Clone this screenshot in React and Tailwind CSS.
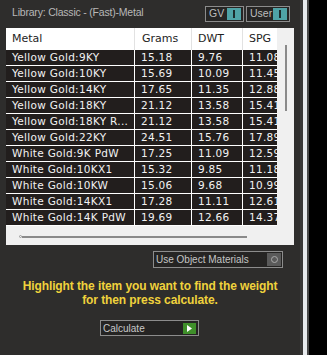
import React from "react";

const rows = [
  ["Yellow Gold:9KY", "15.18", "9.76", "11.08"],
  ["Yellow Gold:10KY", "15.69", "10.09", "11.45"],
  ["Yellow Gold:14KY", "17.65", "11.35", "12.88"],
  ["Yellow Gold:18KY", "21.12", "13.58", "15.41"],
  ["Yellow Gold:18KY R...", "21.12", "13.58", "15.41"],
  ["Yellow Gold:22KY", "24.51", "15.76", "17.89"],
  ["White Gold:9K PdW", "17.25", "11.09", "12.59"],
  ["White Gold:10KX1", "15.32", "9.85", "11.18"],
  ["White Gold:10KW", "15.06", "9.68", "10.99"],
  ["White Gold:14KX1", "17.28", "11.11", "12.61"],
  ["White Gold:14K PdW", "19.69", "12.66", "14.37"],
];

const Toggle = ({ label, width }) => (
  <div
    className={`flex items-center justify-between h-[16px] ${width} border border-[#8c8c8c] bg-[#262524] pl-[3px] pr-[2px]`}
  >
    <span className="text-[10.5px] text-[#bdbdbd] leading-none">{label}</span>
    <span className="flex items-center justify-center w-[14px] h-[12px] bg-[#4fa3a6]">
      <span className="w-[2px] h-[8px] bg-[#1c2b2c]" />
    </span>
  </div>
);

export default function App() {
  return (
    <div
      className="flex w-[327px] h-[355px] bg-black overflow-hidden"
      style={{ fontFamily: "'Liberation Sans', Arial, sans-serif" }}
    >
      <div className="flex flex-col w-[300px] bg-[#2e2d2c]">
        {/* Top bar */}
        <div className="flex items-center justify-between h-[28px] pl-[12px] pr-[10px]">
          <span className="text-[10.5px] text-[#b8b8b8] tracking-[-0.2px] pb-[2px]">
            Library: Classic - (Fast)-Metal
          </span>
          <div className="flex gap-[2px] pb-[1px]">
            <Toggle label="GV" width="w-[39px]" />
            <Toggle label="User" width="w-[44px]" />
          </div>
        </div>

        {/* Table */}
        <div className="ml-[6px] w-[288px] h-[217px] bg-[#f0f0f0] flex flex-col">
          <div className="flex h-[200px]">
            <div
              className="w-[271px] flex flex-col"
              style={{ fontFamily: "'DejaVu Sans', Verdana, sans-serif" }}
            >
              <div className="grid grid-cols-[129px_57px_51px_34px] h-[22px] bg-white text-[11px] text-[#1e1e1e]">
                <div className="flex items-center pl-[6px] border-r border-[#e2e2e2]">Metal</div>
                <div className="flex items-center pl-[7px] border-r border-[#e2e2e2]">Grams</div>
                <div className="flex items-center pl-[6px] border-r border-[#e2e2e2]">DWT</div>
                <div className="flex items-center pl-[6px]">SPG</div>
              </div>
              {rows.map((r) => (
                <div
                  key={r[0]}
                  className="grid grid-cols-[129px_57px_51px_34px] h-[16px] bg-[#221e1d] border-b border-white text-[10.5px] text-[#f2f2f2] tracking-[0.3px]"
                >
                  <div className="flex items-center pl-[6px] border-r border-white whitespace-nowrap overflow-hidden">
                    {r[0]}
                  </div>
                  <div className="flex items-center pl-[6px] border-r border-white">{r[1]}</div>
                  <div className="flex items-center pl-[6px] border-r border-white">{r[2]}</div>
                  <div className="flex items-center pl-[6px] overflow-hidden whitespace-nowrap">{r[3]}</div>
                </div>
              ))}
            </div>
            <div className="flex-1 flex justify-center pt-[17px]">
              <div className="w-[2px] h-[66px] bg-[#8a8a8a] ml-[1px]" />
            </div>
          </div>
          <div className="flex items-center h-[17px] pl-[13px]">
            <span className="w-[3px] h-[3px] rounded-full border border-[#9a9a9a]" />
            <div className="w-[225px] h-[2px] bg-[#8a8a8a]" />
          </div>
        </div>

        {/* Use Object Materials */}
        <div className="flex justify-end pr-[17px] mt-[6px]">
          <div className="flex items-center justify-between w-[130px] h-[17px] border border-[#8c8c8c] bg-[#252423] pl-[2px] pr-[1px]">
            <span className="text-[10px] text-[#c4c4c4]">Use Object Materials</span>
            <span className="flex items-center justify-center w-[14px] h-[13px] bg-[#5a5a5a]">
              <span className="w-[7px] h-[7px] rounded-full border border-[#aaaaaa]" />
            </span>
          </div>
        </div>

        {/* Instructions */}
        <div className="mt-[11px] flex flex-col items-center text-[12px] font-bold text-[#f0d23c] leading-[14px] tracking-[-0.1px]">
          <span>Highlight the item you want to find the weight</span>
          <span>for then press calculate.</span>
        </div>

        {/* Calculate */}
        <div className="flex justify-center mt-[13px] pr-[1px]">
          <div className="flex items-center justify-between w-[99px] h-[16px] border border-[#8c8c8c] bg-[#252423] pl-[2px] pr-[2px]">
            <span className="text-[10px] text-[#c8c8c8]">Calculate</span>
            <span className="flex items-center justify-center w-[13px] h-[11px] bg-[#3f8f2a]">
              <svg width="5" height="7" viewBox="0 0 5 7">
                <path d="M0 0 L5 3.5 L0 7 Z" fill="#ffffff" />
              </svg>
            </span>
          </div>
        </div>
      </div>
      <div className="w-[3px] bg-[#3a3938]" />
      <div className="w-[4px] bg-[#e8ebee]" />
      <div className="w-[2px] bg-[#4a4a4a]" />
      <div className="flex-1 bg-black" />
    </div>
  );
}
